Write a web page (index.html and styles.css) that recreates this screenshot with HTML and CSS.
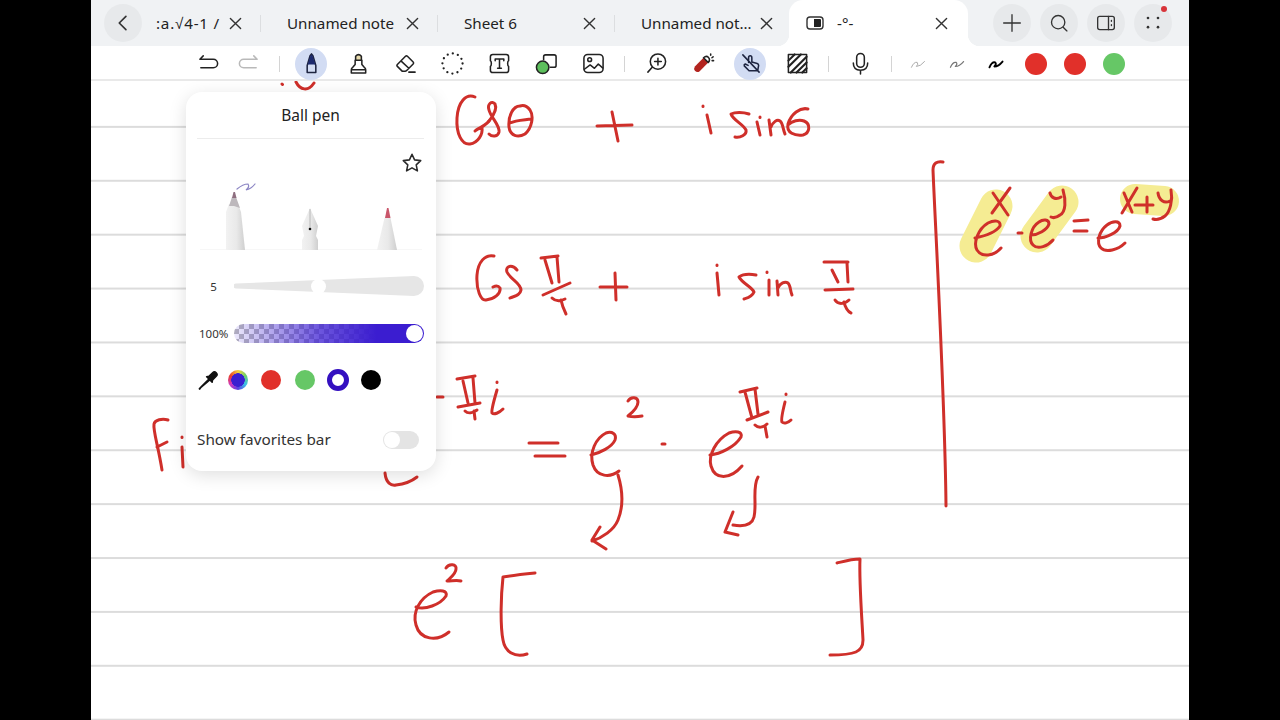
FILE: index.html
```html
<!DOCTYPE html>
<html lang="en">
<head>
<meta charset="utf-8">
<title>Notes</title>
<link rel="stylesheet" href="styles.css">
</head>
<body>
<div class="app">
  <header class="tabbar">
    <button class="round back"><svg class="ic" viewBox="0 0 24 24"><path d="M15.5 4 L7.5 12 L15.5 20"/></svg></button>
    <div class="tab first"><span class="title clip">:a.√4-1 /</span><svg class="x" viewBox="0 0 14 14"><path d="M1.5 1.5 L12.5 12.5 M12.5 1.5 L1.5 12.5"/></svg></div>
    <i class="tabsep"></i>
    <div class="tab"><span class="title">Unnamed note</span><svg class="x" viewBox="0 0 14 14"><path d="M1.5 1.5 L12.5 12.5 M12.5 1.5 L1.5 12.5"/></svg></div>
    <i class="tabsep"></i>
    <div class="tab"><span class="title">Sheet 6</span><svg class="x" viewBox="0 0 14 14"><path d="M1.5 1.5 L12.5 12.5 M12.5 1.5 L1.5 12.5"/></svg></div>
    <i class="tabsep"></i>
    <div class="tab"><span class="title">Unnamed not…</span><svg class="x" viewBox="0 0 14 14"><path d="M1.5 1.5 L12.5 12.5 M12.5 1.5 L1.5 12.5"/></svg></div>
    <div class="tab active">
      <svg class="split" viewBox="0 0 18 14"><rect x="1" y="1" width="16" height="12" rx="3"/><path class="fill" d="M8 3 H14 a1 1 0 0 1 1 1 V10 a1 1 0 0 1 -1 1 H8 Z"/></svg>
      <span class="title">-°-</span>
      <svg class="x" viewBox="0 0 14 14"><path d="M1.5 1.5 L12.5 12.5 M12.5 1.5 L1.5 12.5"/></svg>
    </div>
    <div class="actions">
      <button class="round"><svg class="ic" viewBox="0 0 24 24"><path class="thin" d="M12 2 V22 M2 12 H22"/></svg></button>
      <button class="round"><svg class="ic" viewBox="0 0 24 24"><circle class="thin" cx="11" cy="11" r="8"/><path class="thin" d="M17 17 L21.5 21.5"/></svg></button>
      <button class="round"><svg class="ic" viewBox="0 0 24 24"><rect class="thin" x="2" y="4" width="20" height="16" rx="2.5"/><path class="thin" d="M15 4 V20"/><path class="thin" d="M18.5 9 V10 M18.5 14 V15"/></svg></button>
      <button class="round dots"><svg class="ic" viewBox="0 0 24 24"><circle class="solid" cx="6" cy="6" r="1.6"/><circle class="solid" cx="6" cy="17" r="1.6"/><circle class="solid" cx="18" cy="17" r="1.6"/><circle class="solid" cx="18" cy="6" r="1.6"/></svg><i class="badge"></i></button>
    </div>
  </header>

  <nav class="toolbar">
    <div class="group g-undo">
      <span class="tool"><svg viewBox="0 0 24 24"><path d="M3 7.5 H17 a4.5 4.5 0 0 1 0 9 H4 M3 7.5 L6.5 4"/></svg></span>
      <span class="tool off"><svg viewBox="0 0 24 24"><path d="M21 7.5 H7 a4.5 4.5 0 0 0 0 9 H20 M21 7.5 L17.5 4"/></svg></span>
    </div>
    <i class="sep"></i>
    <div class="group">
      <span class="tool on"><svg viewBox="0 0 24 24"><path d="M7.5 21.5 V14 L10.5 4 L12 2 L13.5 4 L16.5 14 V21.5 Z"/><path class="navy" d="M8 13 L10.7 4.5 L12 2.5 L13.3 4.5 L16 13 Z"/></svg></span>
      <span class="tool"><svg viewBox="0 0 24 24"><path d="M4.5 22 V18.5 Q4.5 17 6 16 L8.5 13 V8.5 H15.5 V13 L18 16 Q19.5 17 19.5 18.5 V22 Z M4.5 18.5 H19.5"/><path class="tan" d="M9 8.5 V4.5 Q12 1 15 4.5 V8.5 Z"/></svg></span>
      <span class="tool"><svg viewBox="0 0 24 24"><path d="M8.5 20 L3.5 15 Q2.5 14 3.5 13 L12 4.5 Q13 3.5 14 4.5 L20 10.5 Q21 11.5 20 12.5 L13.5 19 Q12.5 20 11.5 20 Z M7.5 9.5 L15.5 17 M15.5 21 H22"/></svg></span>
      <span class="tool"><svg viewBox="0 0 24 24"><circle class="dash" cx="12" cy="12" r="10.5"/></svg></span>
      <span class="tool"><svg viewBox="0 0 24 24"><path d="M5 2.5 H19 Q21.5 2.5 21.5 5 V9 Q20.5 9.5 20.5 12 Q20.5 14.5 21.5 15 V19 Q21.5 21.5 19 21.5 H5 Q2.5 21.5 2.5 19 V15 Q3.5 14.5 3.5 12 Q3.5 9.5 2.5 9 V5 Q2.5 2.5 5 2.5 Z M7.5 9 V7.3 H16.5 V9 M12 7.3 V17 M10 17 H14"/></svg></span>
      <span class="tool"><svg viewBox="0 0 24 24"><path d="M9 8 V5 Q9 3 11 3 H20 Q22 3 22 5 V14 Q22 16 20 16 H16"/><circle class="green" cx="8" cy="16" r="6.5"/></svg></span>
      <span class="tool"><svg viewBox="0 0 24 24"><rect x="2" y="2.5" width="20" height="19" rx="4"/><circle cx="8" cy="8" r="2"/><path d="M2.5 18 L8.5 13.5 L13 17 L17 12.5 L21.5 16.5"/></svg></span>
    </div>
    <i class="sep"></i>
    <div class="group">
      <span class="tool"><svg viewBox="0 0 24 24"><circle cx="13.5" cy="10" r="8"/><path d="M13.5 6.5 V13.5 M10 10 H17 M7.5 16 L3 21"/></svg></span>
      <span class="tool"><svg viewBox="0 0 24 24"><path class="laser" d="M3 15 L12 6 L17 11 L8 20 Q5.5 22 3 19.5 Q1.5 17 3 15 Z"/><path d="M12 6 Q15 3.5 17 5.5 Q19.5 8 17 11 L12 6 Z M19.5 2 V3.5 M22 5 L20.8 6 M22.5 9 H21"/></svg></span>
      <span class="tool on"><svg viewBox="0 0 24 24"><path d="M10 11 V6 Q10 4 11.7 4 Q13.4 4 13.4 6 V10.5 L19 12 Q20.5 12.5 20.5 14 L19.5 19.5 H10.5 L5.5 14.5 Q5 13 6.5 12.5 L9.5 14 M4 3 L21 21"/></svg></span>
      <span class="tool"><svg viewBox="0 0 24 24"><rect x="2.5" y="2.5" width="19" height="19"/><path class="hatch" d="M2.5 9 L9 2.5 M2.5 15.5 L15.5 2.5 M5 21.5 L21.5 5 M11 21.5 L21.5 11 M17 21.5 L21.5 17"/></svg></span>
    </div>
    <i class="sep"></i>
    <span class="tool"><svg viewBox="0 0 24 24"><rect x="8" y="1.5" width="8" height="14.5" rx="4"/><path d="M4.5 11.5 Q4.5 19 12 19 Q19.5 19 19.5 11.5 M12 19 V23"/></svg></span>
    <i class="sep"></i>
    <div class="group g-pens">
      <span class="chip"><svg viewBox="0 0 22 12"><path class="sq s1" d="M3 10 Q6 3 10 4 Q12 6 9 9 Q14 9 19 3"/></svg></span>
      <span class="chip"><svg viewBox="0 0 22 12"><path class="sq s2" d="M3 10 Q6 3 10 4 Q12 6 9 9 Q14 9 19 3"/></svg></span>
      <span class="chip"><svg viewBox="0 0 22 12"><path class="sq s3" d="M3 10 Q6 3 10 4 Q12 6 9 9 Q14 9 19 3"/></svg></span>
      <i class="chip dot red"></i>
      <i class="chip dot red"></i>
      <i class="chip dot green-dot"></i>
    </div>
  </nav>

  <main class="canvas">
    <svg class="ink" viewBox="91 81 1098 639">
      <g class="marker">
        <path d="M976 246 L996 206"/>
        <path d="M1037 236 L1062 202"/>
        <path d="M1135 199 L1164 201"/>
      </g>
      <g class="strokes">
        <path d="M296 82 C300 90 308 92 314 83 M282 84 L282.5 84.5"/>
        <path d="M168 420 C162 418 155 420 154 424 C153 431 158 445 162 470 M157 447 L167 442 M182 447 L183 467 M182 437 L182 437.5"/>

        <path d="M475 97 C466 93 458 102 457 118 C456 134 462 145 470 144 C478 143 483 134 482 128 C480 128 477 129 475 131 M476 130 C482 127 486 125 489 121"/>
        <path d="M489 121 C494 115 497 108 495 104 C492 100 487 104 489 110 C491 118 500 125 499 132 C498 137 492 137 489 134"/>
        <path d="M520 106 C513 106 508 116 509 127 C510 136 518 138 525 134 C532 128 534 116 530 110 C527 106 523 105 520 106 M510 123 C516 120 525 120 531 119"/>
        <path d="M597 126 L632 125 M612 112 L618 141"/>
        <path d="M703 106 L703 106.5 M707 115 L711 133"/>
        <path d="M749 114 C743 112 735 112 731 114 C733 120 743 124 746 130 C747 135 740 138 735 137"/>
        <path d="M760 117 L760 117.5 M757 122 L760 135"/>
        <path d="M769 120 L771 135 M771 127 C773 122 777 119 780 121 C783 123 783 130 785 134"/>
        <path d="M808 109 C800 107 791 114 788 124 C786 133 795 136 803 135 C810 133 811 124 804 121 C799 119 792 121 788 125"/>

        <path d="M494 256 C485 254 478 262 477 275 C476 290 481 301 486 300 C494 299 501 294 500 288 C498 285 495 286 493 287"/>
        <path d="M517 270 C512 264 505 266 507 272 C510 279 521 283 521 290 C520 296 514 296 510 298"/>
        <path d="M541 258 L558 256 M545 260 L552 283 M557 257 L559 282 M543 295 L570 283 M552 298 C555 301 559 302 565 299 M561 300 C562 305 564 310 566 314"/>
        <path d="M600 287 L627 287 M615 273 L616 300"/>
        <path d="M717 265 L717 265.5 M717 273 L719 295"/>
        <path d="M756 275 C750 274 743 274 739 277 C742 283 752 287 754 292 C752 297 747 298 744 299"/>
        <path d="M767 272 L767 272.5 M769 280 L769 295"/>
        <path d="M777 281 L778 295 M778 288 C780 283 785 281 788 283 C791 286 790 291 792 295"/>
        <path d="M824 262 L848 262 M832 270 L838 282 M847 263 L848 282 M825 290 L853 289 M835 300 C838 305 845 304 849 300 M844 302 C845 307 848 312 851 313"/>

        <path d="M437 397 L443 397"/>
        <path d="M457 379 L475 376 M463 381 L468 403 M473 378 L475 403 M458 407 L480 403 M465 411 C468 414 473 413 477 410 M474 411 L475 419"/>
        <path d="M497 382 L497 382.5 M497 390 C495 397 491 410 492 413 C494 415 499 413 503 409"/>
        <path d="M385 473 C386 483 391 486 396 485 C405 484 412 481 417 477"/>
        <path d="M529 443 L558 443 M535 456 L565 456"/>
        <path d="M591 455 C600 453 612 447 615 440 C617 434 612 431 606 433 C596 438 589 452 593 465 C597 477 610 478 619 471"/>
        <path d="M628 401 C631 396 638 397 638 402 C638 407 633 412 628 416 C632 417 637 417 642 416"/>
        <path d="M662 444 L665 444"/>
        <path d="M710 455 C720 454 735 447 741 437 C743 431 735 431 729 433 C716 440 708 455 711 466 C715 480 730 480 742 466"/>
        <path d="M740 392 L757 388 M745 392 L752 418 M755 389 L758 414 M747 420 L768 412 M755 425 C758 428 763 428 767 424 M765 426 L767 437"/>
        <path d="M786 394 L786 394.5 M785 402 C783 410 781 420 782 422 C784 424 788 423 791 420"/>
        <path d="M618 475 C622 488 624 505 618 520 C614 530 602 538 592 541 M600 527 L592 540 L606 549"/>
        <path d="M758 477 C752 487 757 505 754 517 C752 525 745 527 733 525 M733 512 L725 532 L738 535"/>

        <path d="M416 607 C425 610 440 605 446 596 C448 590 440 590 433 592 C420 598 412 612 416 625 C420 640 437 642 449 632"/>
        <path d="M446 568 C449 563 457 564 456 569 C456 574 450 578 447 581 C452 581 457 580 461 581"/>
        <path d="M535 573 C525 574 515 575 503 577 C501 595 500 625 503 640 C505 652 515 658 527 654"/>
        <path d="M837 563 C845 561 852 559 860 559 C859 580 862 620 863 640 C863 652 855 655 830 655"/>

        <path d="M943 162 C937 161 933 163 933 170 C935 220 945 400 946 506"/>
        <path d="M975 238 C985 236 996 232 1000 226 C1001 220 994 220 988 223 C978 229 973 243 977 250 C982 258 994 256 1001 248"/>
        <path d="M993 193 L1008 215 M1010 188 L992 213"/>
        <path d="M1018 233 L1022 233"/>
        <path d="M1031 235 C1038 235 1047 230 1049 224 C1049 219 1043 219 1039 222 C1031 227 1028 240 1033 245 C1038 250 1048 246 1053 240"/>
        <path d="M1050 193 C1051 198 1056 200 1061 197 M1063 190 C1066 200 1066 212 1060 215 C1056 218 1053 218 1051 217"/>
        <path d="M1074 221 L1088 220 M1074 231 L1087 231"/>
        <path d="M1098 238 C1105 238 1118 233 1120 226 C1120 220 1112 221 1107 225 C1099 231 1096 243 1101 248 C1106 253 1118 250 1125 243"/>
        <path d="M1137 188 L1122 213 M1124 193 L1132 212"/>
        <path d="M1135 205 L1153 205 M1147 197 L1147 212"/>
        <path d="M1158 193 C1159 200 1164 204 1170 201 M1171 190 C1173 200 1170 212 1165 216 C1161 219 1156 220 1153 219"/>
      </g>
    </svg>

    <section class="popover">
      <h2 class="pop-title">Ball pen</h2>
      <div class="star-row"><svg class="star" viewBox="0 0 24 24"><path d="M12 2.5 L14.8 8.6 L21.5 9.4 L16.6 14 L17.9 20.6 L12 17.3 L6.1 20.6 L7.4 14 L2.5 9.4 L9.2 8.6 Z"/></svg></div>
      <svg class="pens" viewBox="197 176 228 74">
        <defs>
          <linearGradient id="body" x1="0" x2="1" y1="0" y2="0"><stop offset="0" stop-color="#f2f2f2"/><stop offset=".55" stop-color="#e9e9e9"/><stop offset="1" stop-color="#cfcfcf"/></linearGradient>
        </defs>
        <path class="pen-line" d="M200 250 H422"/>
        <path class="scribble" d="M237 189 Q243 184 248 184 Q250 187 246 190 Q251 189 255 184"/>
        <path fill="url(#body)" d="M226 250 V212 L229 204 L238 204 L241 212 L245 250 Z"/>
        <path fill="#bdb8bc" d="M229 206 L232 197 L236 197 L240 208 L234 206 Z"/>
        <path fill="#8f6f80" d="M232 198 L233.5 192 L235 192 L236.5 198 Z"/>
        <path fill="url(#body)" d="M302 250 V240 L304 236 L302 226 L310 208 L318 226 L316 236 L318 240 V250 Z"/>
        <path stroke="#999" stroke-width=".6" d="M310 209 V228"/>
        <circle cx="310" cy="229" r="1.3" fill="#111"/>
        <path fill="url(#body)" d="M377 250 L384.5 218 H390.5 L397 250 Z"/>
        <path fill="#c9566a" d="M385 218 L387 208 L388.5 208 L390.5 218 Z"/>
      </svg>
      <div class="row slider-row">
        <span class="label num">5</span>
        <div class="track wedge">
          <svg class="wedge-svg" viewBox="0 0 190 20"><path d="M2 7.5 L180 0 A10 10 0 0 1 180 20 L2 12.5 A2.5 2.5 0 0 1 2 7.5 Z"/></svg>
          <i class="thumb small"></i>
        </div>
      </div>
      <div class="row opacity-row">
        <span class="label">100%</span>
        <div class="track opacity"><i class="thumb ring"></i></div>
      </div>
      <div class="row swatch-row">
        <svg class="dropper" viewBox="0 0 24 24"><path d="M4 20.5 L3 22 L2.5 21.5 L4 20 L13 11 L14 12 Z"/><path class="head" d="M10.5 8.5 L13 8 L17 4 Q19 2 21 4 Q23 6 21 8 L17 12 L16.5 14.5 Z"/></svg>
        <div class="swatches">
          <i class="swatch wheel"></i>
          <i class="swatch c-red"></i>
          <i class="swatch c-green"></i>
          <i class="swatch c-blue"></i>
          <i class="swatch c-black"></i>
        </div>
      </div>
      <div class="row toggle-row">
        <span class="fav">Show favorites bar</span>
        <i class="toggle"></i>
      </div>
    </section>
  </main>
</div>
</body>
</html>
```
FILE: styles.css
```css
* { box-sizing: border-box; }
html, body { margin: 0; height: 100%; background: #000; overflow: hidden; }
body { font-family: "Noto Sans", "Liberation Sans", sans-serif; color: #222; }
.app { width: 1098px; height: 720px; margin: 0 auto; display: flex; flex-direction: column; background: #fff; }

/* tab bar */
.tabbar { height: 46px; flex: none; display: flex; align-items: center; padding-left: 13px; background: #f0f2f4; }
.round { width: 38px; height: 38px; flex: none; border: 0; padding: 0; border-radius: 50%; background: #e7e9eb; display: flex; align-items: center; justify-content: center; position: relative; }
.back { margin-right: 8px; }
.ic { width: 20px; height: 20px; fill: none; stroke: #333; stroke-width: 2; stroke-linecap: round; stroke-linejoin: round; }
.ic .thin { stroke-width: 1.6; fill: none; }
.ic .solid { fill: #333; stroke: none; }
.tab { width: 176px; height: 46px; flex: none; display: flex; align-items: center; padding: 0 18px 0 26px; font-size: 15.2px; position: relative; }
.tab.first { width: 110px; padding-left: 6px; }
.title { flex: 1; white-space: nowrap; overflow: hidden; line-height: 20px; }
.clip { letter-spacing: .8px; }
.x { width: 13px; height: 13px; flex: none; fill: none; stroke: #333; stroke-width: 1.5; stroke-linecap: round; }
.tabsep { width: 1px; height: 17px; flex: none; background: #dcdee0; }
.tab.active { width: 179px; margin-left: -2px; padding: 0 20px 0 17px; background: #fff; border-radius: 14px 14px 0 0; }
.tab.active::before, .tab.active::after { content: ""; position: absolute; bottom: 0; width: 12px; height: 12px; }
.tab.active::before { left: -12px; background: radial-gradient(circle at 0 0, transparent 12px, #fff 12.5px); }
.tab.active::after { right: -12px; background: radial-gradient(circle at 100% 0, transparent 12px, #fff 12.5px); }
.tab.active .title { margin-left: 13px; }
.split { width: 18px; height: 14px; flex: none; fill: none; stroke: #333; stroke-width: 1.4; }
.split .fill { fill: #222; stroke: none; }
.actions { display: flex; gap: 9px; margin-left: 25px; }
.badge { position: absolute; top: 2px; right: 5px; width: 6px; height: 6px; border-radius: 50%; background: #d8343a; }

/* tool bar */
.toolbar { height: 35px; flex: none; display: flex; align-items: center; gap: 15px; padding: 2px 0 0 101px; background: #fff; border-bottom: 2px solid #e9e9e9; }
.group { display: flex; align-items: center; gap: 15px; }
.g-undo { gap: 8px; }
.g-pens { gap: 17px; }
span.chip + .dot { margin-left: 1px; }
.sep { width: 1px; height: 16px; flex: none; background: #d4d4d4; }
.tool { width: 32px; height: 32px; flex: none; display: flex; align-items: center; justify-content: center; border-radius: 50%; }
.tool svg { width: 23px; height: 23px; fill: none; stroke: #222; stroke-width: 1.6; stroke-linecap: round; stroke-linejoin: round; }
.tool.off svg { stroke: #b9b9b9; }
.tool.on { background: #d2dcf3; }
.tool.on svg { stroke: #1d2440; }
.tool .navy { fill: #1d2a6e; stroke: none; }
.tool .tan { fill: #e9dcae; }
.tool .dash { stroke-width: 2.4; stroke-dasharray: 0 5.5; }
.tool .green { fill: #5cbf5c; }
.tool .laser { fill: #b3241f; stroke: none; }
.tool .hatch { stroke-width: 2.2; }
.chip { width: 22px; height: 22px; flex: none; display: flex; align-items: center; justify-content: center; }
.chip svg { width: 18px; height: 12px; }
.sq { fill: none; stroke-linecap: round; stroke-linejoin: round; }
.s1 { stroke: #aaa; stroke-width: 1.2; }
.s2 { stroke: #777; stroke-width: 1.5; }
.s3 { stroke: #000; stroke-width: 2.3; }
.dot { border-radius: 50%; }
.red { background: #e1302a; }
.green-dot { background: #66c766; }

/* canvas */
.canvas { flex: 1; position: relative; overflow: hidden; background-color: #fff; background-image: linear-gradient(to bottom, transparent 51.9px, #dcdcdc 51.9px); background-size: 100% 53.9px; background-position: 0 -7px; }
.ink { position: absolute; inset: 0; width: 100%; height: 100%; }
.marker path { fill: none; stroke: #f5ec93; stroke-width: 33; stroke-linecap: round; }
.marker path:last-child { stroke-width: 30; }
.strokes path { fill: none; stroke: #cf2f2a; stroke-width: 3; stroke-linecap: round; stroke-linejoin: round; }

/* pen popover */
.popover { position: absolute; left: 95px; top: 11px; width: 250px; height: 379px; padding: 0 12px 0 11px; background: #fff; border-radius: 16px; box-shadow: 0 4px 18px rgba(0,0,0,.13); }
.pop-title { margin: 0; height: 47px; padding-bottom: 1px; display: flex; align-items: center; justify-content: center; font-size: 15.5px; font-weight: 400; color: #222; border-bottom: 1px solid #ececec; }
.star-row { display: flex; justify-content: flex-end; height: 37px; padding-top: 13px; }
.star { width: 22px; height: 22px; margin-right: 1px; fill: none; stroke: #2a2a2a; stroke-width: 1.7; stroke-linejoin: round; }
.pens { display: block; width: 228px; height: 74px; }
.pen-line { stroke: #efefef; stroke-width: 1; fill: none; }
.scribble { fill: none; stroke: #8c86c4; stroke-width: 1.2; stroke-linecap: round; }
.row { display: flex; align-items: center; }
.label { width: 37px; flex: none; font-size: 11.5px; padding-left: 2px; color: #333; }
.num { text-align: center; padding-left: 0; padding-right: 4px; }
.track { width: 190px; height: 20px; position: relative; flex: none; }
.slider-row { margin-top: 26px; height: 20px; }
.wedge-svg { display: block; width: 190px; height: 20px; fill: #e6e6e6; }
.thumb { position: absolute; border-radius: 50%; background: #fff; }
.thumb.small { left: 77px; top: 2.5px; width: 15px; height: 15px; }
.opacity-row { margin-top: 27px; height: 20px; }
.opacity { border-radius: 10px; height: 19px; background-image: linear-gradient(to right, rgba(60,30,210,.1), rgba(60,30,210,.75) 45%, #3b1dd0 75%), conic-gradient(#bdbdbd 25%, #fff 25% 50%, #bdbdbd 50% 75%, #fff 75%); background-size: 100% 100%, 10px 10px; }
.thumb.ring { right: 1px; top: 1px; width: 17px; height: 17px; }
.swatch-row { margin-top: 24px; height: 26px; }
.dropper { width: 22px; height: 22px; flex: none; fill: none; stroke: #111; stroke-width: 1.6; stroke-linejoin: round; }
.dropper .head { fill: #111; }
.swatches { display: flex; align-items: center; gap: 13.3px; margin-left: 9px; }
.swatch { width: 20px; height: 20px; flex: none; border-radius: 50%; }
.wheel { background: radial-gradient(circle, #3a1fd0 0 6.5px, transparent 7px), conic-gradient(#f6d33c, #6cd06c, #3ac0e8, #5a40e0, #d03ac0, #e8402a, #f6d33c); }
.c-red { background: #e1302a; }
.c-green { background: #66c766; }
.c-blue { width: 22px; height: 22px; margin: 0 -1px; background: #fff; border: 5px solid #3410c0; }
.c-black { background: #000; }
.toggle-row { margin-top: 37px; height: 20px; justify-content: space-between; align-items: flex-start; }
.fav { font-size: 15.3px; line-height: 19px; color: #333; }
.toggle { width: 36px; height: 18px; margin: 1px 5px 0 0; border-radius: 9px; background: #e4e4e4; position: relative; }
.toggle::before { content: ""; position: absolute; left: 1px; top: 1px; width: 16px; height: 16px; border-radius: 50%; background: #fff; }
```
